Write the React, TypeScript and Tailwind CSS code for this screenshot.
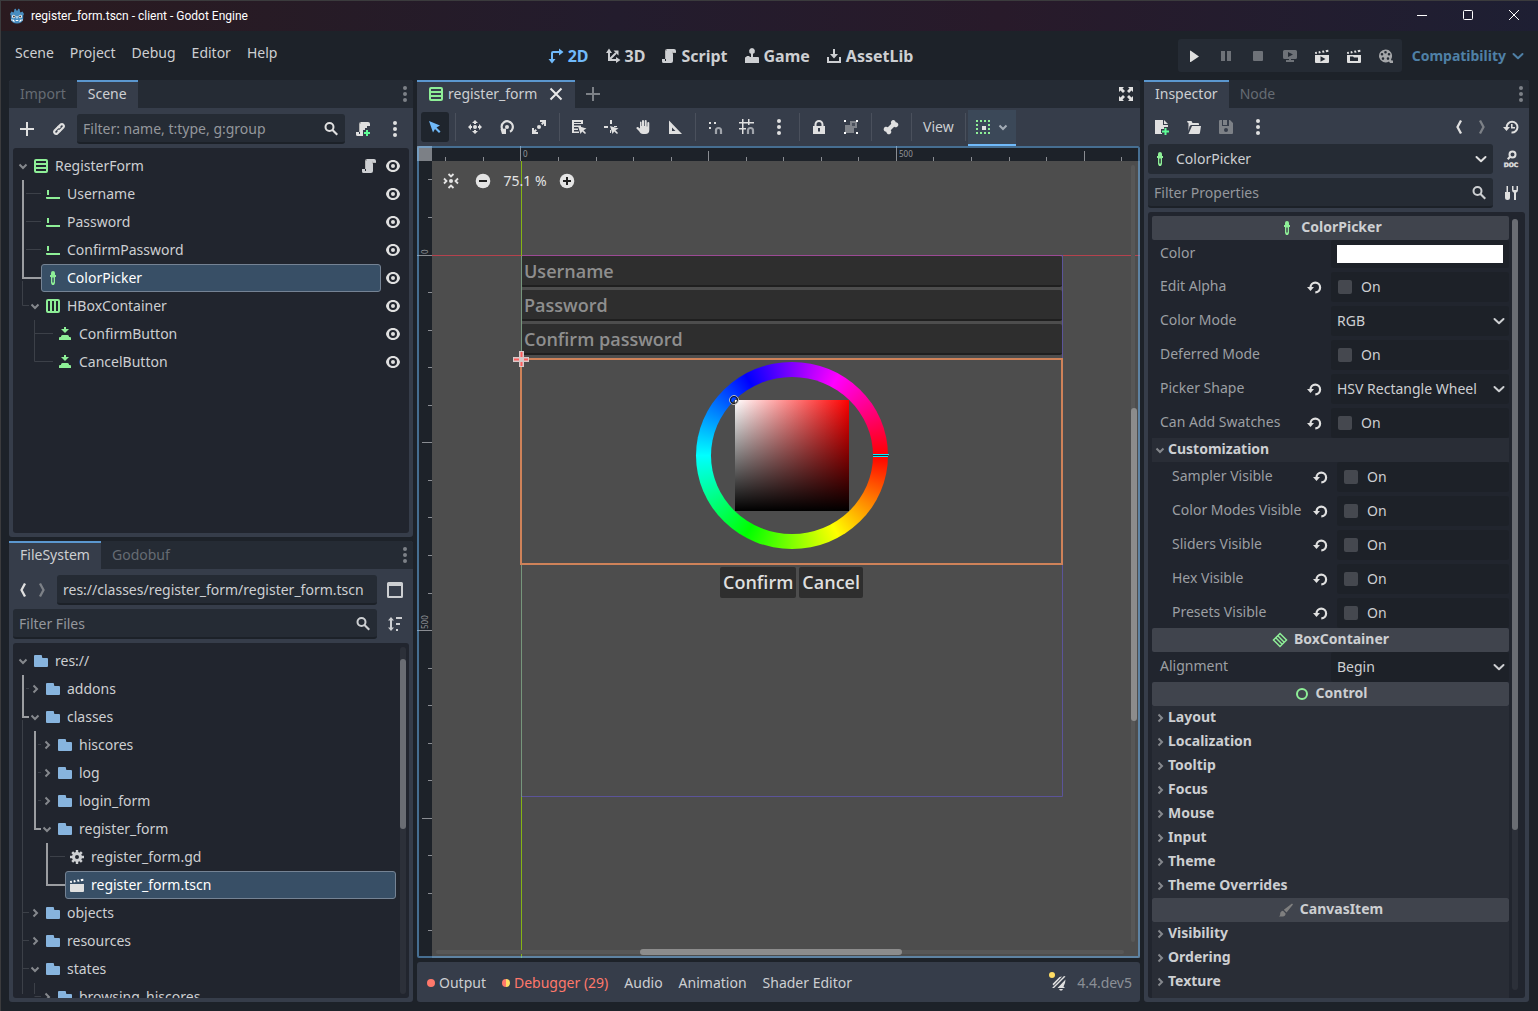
import type { ReactNode } from "react";

type IconProps = { className?: string };

function Svg({ className = "", children }: { className?: string; children: ReactNode }) {
  return (
    <svg viewBox="0 0 16 16" fill="currentColor" aria-hidden="true" className={`size-4 shrink-0 ${className}`}>
      {children}
    </svg>
  );
}

/* ---------- icons ---------- */

const PlusIcon = ({ className }: IconProps) => (
  <Svg className={className}><path d="M7 1h2v6h6v2H9v6H7V9H1V7h6z" /></Svg>
);
const LinkIcon = () => (
  <Svg>
    <g fill="none" stroke="currentColor" strokeWidth="2.200">
      <path d="M6.800 6.400 9.700 3.500a2 2 0 0 1 2.800 2.800L9.600 9.200a2 2 0 0 1-2.800 0" />
      <path d="M9.200 9.600 6.300 12.500A2 2 0 0 1 3.500 9.700L6.400 6.800a2 2 0 0 1 2.800 0" />
    </g>
  </Svg>
);
const SearchIcon = () => (
  <Svg>
    <circle cx="6.500" cy="6" r="4" fill="none" stroke="currentColor" strokeWidth="2" />
    <path d="m8.500 9.500 1.500-1.500 5 5-1.500 1.500z" />
  </Svg>
);
const DotsIcon = ({ className }: IconProps) => (
  <Svg className={className}>
    <circle cx="8" cy="2" r="2" /><circle cx="8" cy="8" r="2" /><circle cx="8" cy="14" r="2" />
  </Svg>
);
const ScriptIcon = () => (
  <Svg>
    <path d="M6 1v1a1 1 0 0 0-1 1v10H4v-2H1v2.500A1.500 1.500 0 0 0 2.500 15H10a2 2 0 0 0 2-2V5h3V3a2 2 0 0 0-2-2z" />
    <path d="M6 1a2 2 0 0 0-2 2v8h1V3a1 1 0 0 1 1-1zM11 3v3h1V5h3V4h-3z" fill="#b4b4b4" />
  </Svg>
);
const ScriptAddIcon = () => (
  <Svg>
    <path d="M6 1v1a1 1 0 0 0-1 1v10H4v-2H1v2.500A1.500 1.500 0 0 0 2.500 15H8v-2h0V9h2V7h2V5h3V3a2 2 0 0 0-2-2z" />
    <path d="M6 1a2 2 0 0 0-2 2v8h1V3a1 1 0 0 1 1-1z" fill="#b4b4b4" />
    <path d="M11 9h2v2h2v2h-2v2h-2v-2H9v-2h2z" fill="#5fff97" />
  </Svg>
);
const VBoxIcon = () => (
  <Svg className="text-[#8eef97]">
    <path fillRule="evenodd" d="M3 1a2 2 0 0 0-2 2v10a2 2 0 0 0 2 2h10a2 2 0 0 0 2-2V3a2 2 0 0 0-2-2zm0 2h10v2H3zm0 4h10v2H3zm0 4h10v2H3z" />
  </Svg>
);
const HBoxIcon = () => (
  <Svg className="text-[#8eef97]">
    <path fillRule="evenodd" d="M3 1a2 2 0 0 0-2 2v10a2 2 0 0 0 2 2h10a2 2 0 0 0 2-2V3a2 2 0 0 0-2-2zm0 2h2v10H3zm4 0h2v10H7zm4 0h2v10h-2z" />
  </Svg>
);
const LineEditIcon = () => (
  <Svg className="text-[#8eef97]"><path d="M2 4h2v5H2zM1 11h14v2H2a1 1 0 0 1-1-1z" /></Svg>
);
const PickerIcon = () => (
  <Svg className="text-[#8eef97]">
    <path fillRule="evenodd" d="M8 1a2 2 0 0 0-2 2v2H5v2h1v6l1 2h2l1-2V7h1V5h-1V3a2 2 0 0 0-2-2zM7.300 7.500h1.400v5H7.300z" />
  </Svg>
);
const ButtonIcon = () => (
  <Svg className="text-[#8eef97]">
    <path d="M7 1h2v2h3L8 7 4 3h3zM5.500 9h5A1.500 1.500 0 0 1 12 10.500V11h1a1 1 0 0 1 1 1v2H2v-2a1 1 0 0 1 1-1h1v-.5A1.500 1.500 0 0 1 5.500 9z" />
  </Svg>
);
const EyeIcon = () => (
  <Svg>
    <path fillRule="evenodd" d="M8 2C4.200 2 1.500 4.700 1 8c.5 3.300 3.200 6 7 6s6.500-2.700 7-6c-.5-3.300-3.200-6-7-6zm0 2a4 4 0 1 1 0 8 4 4 0 0 1 0-8zm0 2a2 2 0 1 0 0 4 2 2 0 0 0 0-4z" />
  </Svg>
);
const FolderIcon = () => (
  <Svg className="text-[#87b4de]">
    <path d="M2 2a1 1 0 0 0-1 1v10a1 1 0 0 0 1 1h12a1 1 0 0 0 1-1V6a1 1 0 0 0-1-1h-4a1 1 0 0 1-1-1V3a1 1 0 0 0-1-1z" />
  </Svg>
);
const GearIcon = () => (
  <Svg>
    <circle cx="8" cy="8" r="3.500" fill="none" stroke="currentColor" strokeWidth="3" />
    <path d="M6.800 1h2.400v3H6.800zM6.800 12h2.400v3H6.800zM1 6.800h3v2.400H1zM12 6.800h3v2.400h-3z" />
    <path d="m2.300 4.100 1.800-1.800 2 2-1.800 1.800zM9.900 11.700l1.800-1.800 2 2-1.800 1.800zM11.900 2.300l1.800 1.800-2 2-1.800-1.800zM4.300 9.900l1.800 1.800-2 2-1.800-1.800z" />
  </Svg>
);
const clapSlats = "m1 4 .3 2 1.800-.3L2.700 3.700zM4.500 3.400l.3 2 2-.3-.8-2zM8 2.800l.6 2 2-.3-.8-2zM11.500 2.200l.7 2 2.300-.4-.3-2z";
const SceneFileIcon = () => (
  <Svg><path d={clapSlats} /><path d="M1 7h14v7a1 1 0 0 1-1 1H2a1 1 0 0 1-1-1z" fill="#e0e0e0" /></Svg>
);
const PlaySceneIcon = () => (
  <Svg><path d={clapSlats} /><path fillRule="evenodd" d="M1 7h14v7a1 1 0 0 1-1 1H2a1 1 0 0 1-1-1zm5.500 1.200v5.600L11.500 11z" /></Svg>
);
const PlayCustomIcon = () => (
  <Svg><path d={clapSlats} /><path fillRule="evenodd" d="M1 7h14v7a1 1 0 0 1-1 1H2a1 1 0 0 1-1-1zm3 1.500V13h8V9.500H8l-1-1z" /></Svg>
);
const ChevronDown = ({ className = "" }: IconProps) => (
  <svg viewBox="0 0 12 12" aria-hidden="true" className={`size-3 shrink-0 ${className}`}>
    <path d="m2.500 4.500 3.500 3.500 3.500-3.500" fill="none" stroke="currentColor" strokeWidth="2" />
  </svg>
);
const ChevronRight = ({ className = "" }: IconProps) => (
  <svg viewBox="0 0 12 12" aria-hidden="true" className={`size-3 shrink-0 ${className}`}>
    <path d="m4.500 2.500 3.500 3.500-3.500 3.500" fill="none" stroke="currentColor" strokeWidth="2" />
  </svg>
);
const DropIcon = ({ className }: IconProps) => (
  <Svg className={className}><path d="M3.500 6 8 10.200 12.500 6" fill="none" stroke="currentColor" strokeWidth="2" strokeLinecap="round" strokeLinejoin="round" /></Svg>
);
const BackIcon = () => (
  <Svg className="text-[#e0e0e0]"><path d="M10 1.500 6.500 8l3.500 6.500" fill="none" stroke="currentColor" strokeWidth="2.300" /></Svg>
);
const ForwardIcon = () => (
  <Svg><path d="M5 1.500 8.500 8 5 14.500" fill="none" stroke="currentColor" strokeWidth="2.300" /></Svg>
);
const SplitIcon = () => (
  <Svg><path fillRule="evenodd" d="M1.500 0A1.500 1.500 0 0 0 0 1.500v13A1.500 1.500 0 0 0 1.500 16h13a1.500 1.500 0 0 0 1.500-1.500v-13A1.500 1.500 0 0 0 14.500 0zM2 4h12v10H2z" /></Svg>
);
const SortIcon = () => (
  <Svg>
    <path d="M4 1 7 4.500H5v7h2L4 15l-3-3.500h2v-7H1zM9 1h6v2H9zM9 7h4v2H9zM9 13h2v2H9z" />
  </Svg>
);
const CloseIcon = () => (
  <Svg><path d="m2.500 2.500 11 11m0-11-11 11" fill="none" stroke="currentColor" strokeWidth="2" /></Svg>
);
const ExpandIcon = () => (
  <Svg>
    <path d="M1 1h5L4.500 2.500 7 5 5 7 2.500 4.500 1 6zM15 1v5l-1.500-1.500L11 7 9 5l2.500-2.500L10 1zM1 15v-5l1.500 1.500L5 9l2 2-2.500 2.500L6 15zM15 15h-5l1.500-1.500L9 11l2-2 2.500 2.500L15 10z" />
  </Svg>
);
const SelectIcon = () => (
  <Svg className="text-[#70bafa]"><path d="m2 2 4 11.500 2-3.500 4 4 1.500-1.500-4-4 3.500-2z" /></Svg>
);
const MoveIcon = () => (
  <Svg>
    <circle cx="8" cy="8" r="2" />
    <path d="m8 1 3 3H9v1H7V4H5zM8 15l-3-3h2v-1h2v1h2zM1 8l3-3v2h1v2H4v2zM15 8l-3 3V9h-1V7h1V5z" />
  </Svg>
);
const RotateIcon = () => (
  <Svg>
    <path d="M4 11.500A5.600 5.600 0 1 1 11 12.700" fill="none" stroke="currentColor" strokeWidth="2.200" />
    <circle cx="8" cy="8" r="2" />
    <path d="M1.500 10 7 9.500V15h-4z" />
  </Svg>
);
const ScaleIcon = () => (
  <Svg>
    <circle cx="8" cy="8" r="2" />
    <path d="M9 1h6v6h-2V4.500L11.500 6 10 4.500 11.500 3H9zM1 9h2v2.500L4.500 10 6 11.500 4.500 13H7v2H1z" />
  </Svg>
);
const ListSelectIcon = () => (
  <Svg>
    <path fillRule="evenodd" d="M1 1h11v4H3v1.500h7V8H3v1.500h4V11H3v1.500h5V14H1zM3 3v1h7V3z" />
    <path d="m7 7 2.500 8 1.700-2.500L14 15l1-1-2.500-2.800L15.500 9.500z" />
  </Svg>
);
const PivotIcon = () => (
  <Svg>
    <path d="M7 1h2v4H7zM1 7h4v2H1zM7 11h1v3H7zM11 7h3v1h-3z" />
    <path d="m7 7 2.500 8 1.700-2.500L14 15l1-1-2.500-2.800L15.500 9.500z" />
  </Svg>
);
const PanIcon = () => (
  <Svg>
    <path d="M7 2a1 1 0 0 1 2 0v5h.7V2a1 1 0 0 1 2 0v5.500h.6V4A1 1 0 0 1 14.300 4v7a4 4 0 0 1-4 4H8c-2 0-3-1-4-3L1.500 9.500c-.5-1 .8-2 1.800-1.200L5 9.500V3a.8.8 0 0 1 1.500 0v4H7z" />
  </Svg>
);
const RulerIcon = () => (
  <Svg><path fillRule="evenodd" d="M2 1.500V15h13zM5 8.500l3.500 3.500H5z" /></Svg>
);
const Magnet = () => <path d="M9 15v-3.500a2.500 2.500 0 0 1 5 0V15" fill="none" stroke="#a0a4ab" strokeWidth="2.200" />;
const SmartSnapIcon = () => (
  <Svg><path d="M2 3h2v2H2zM7 3h2v2H7zM2 8h2v2H2z" /><Magnet /></Svg>
);
const GridSnapIcon = () => (
  <Svg>
    <path d="M3 0h1.500v3H9V0h1.500v3H15v1.500h-4.500V6H9V4.500H4.500V9H7v1.500H4.500V15H3v-4.500H0V9h3V4.500H0V3h3z" /><Magnet />
  </Svg>
);
const LockIcon = () => (
  <Svg><path fillRule="evenodd" d="M8 1a4.500 4.500 0 0 0-4.500 4.500V7H2v8h12V7h-1.500V5.500A4.500 4.500 0 0 0 8 1zm0 2a2.500 2.500 0 0 1 2.500 2.500V7h-5V5.500A2.500 2.500 0 0 1 8 3zM7 9h2v3.500H7z" /></Svg>
);
const GroupIcon = () => (
  <Svg>
    <path d="M7 2h7v7h-3v5H2V6h5z" fill="#7f838a" />
    <path d="M9 4h3v3H9z" fill="#4b515d" />
    <path d="M1 1h2v2H1zM13 1h2v2h-2zM1 13h2v2H1zM13 13h2v2h-2z" fill="#ffffff" />
  </Svg>
);
const BoneIcon = () => (
  <Svg>
    <path d="M10.500 1A2.500 2.500 0 0 0 8.300 4.800L4.800 8.300A2.500 2.500 0 1 0 3.300 12.700 2.500 2.500 0 1 0 7.700 11.200L11.200 7.700A2.500 2.500 0 1 0 12.700 3.300 2.500 2.500 0 0 0 10.500 1z" />
  </Svg>
);
const AnchorIcon = () => (
  <Svg>
    <path d="M1 2H15M1 14H15M2 1V15M14 1V15" fill="none" stroke="#8eef97" strokeWidth="2" strokeDasharray="2 2" />
    <path d="M7 7h4v4H7z" fill="#e0e0e0" />
  </Svg>
);
const CenterIcon = () => (
  <Svg className="text-[#e4e4e4]">
    <circle cx="8" cy="8" r="2" />
    <path d="M5.500 1 8 3.500 10.500 1M5.500 15 8 12.500l2.500 2.500M1 5.500 3.500 8 1 10.500M15 5.500 12.500 8l2.500 2.500" fill="none" stroke="currentColor" strokeWidth="1.800" />
  </Svg>
);
const ZoomOutIcon = () => (
  <Svg><circle cx="8" cy="8" r="7.300" fill="#e4e4e4" /><path d="M4 7h8v2H4z" fill="#222" /></Svg>
);
const ZoomInIcon = () => (
  <Svg><circle cx="8" cy="8" r="7.300" fill="#e4e4e4" /><path d="M4 7h3V4h2v3h3v2H9v3H7V9H4z" fill="#222" /></Svg>
);
const TwoDIcon = () => (
  <Svg><path d="M3 11V5a2 2 0 0 1 2-2h6V0.500L15.500 4 11 7.500V5H5v6h2.500L4 15.500.5 11z" /></Svg>
);
const ThreeDIcon = () => (
  <Svg>
    <path d="M4 11V5M5 12h7M5 11l6-6" fill="none" stroke="currentColor" strokeWidth="2" />
    <path d="M4 0.500 7 5H1zM15.500 12 11 15V9zM13.500 2.500v5L8.500 2.500zM3 10h2v3H3z" />
  </Svg>
);
const GameIcon = () => (
  <Svg><path d="M8 0a3 3 0 0 0-1 5.800V9H5.500V8h-3v1H2a1 1 0 0 0-1 1v5h14v-5a1 1 0 0 0-1-1H9V5.800A3 3 0 0 0 8 0z" /></Svg>
);
const AssetIcon = () => (
  <Svg><path d="M7 1h2v5h3l-4 4.500L4 6h3zM1 9h2v4h10V9h2v6H1z" /></Svg>
);
const PlayIcon = () => <Svg><path d="M4 3v10.500a.5.500 0 0 0 .8.400L13 8.500 4.800 2.700A.5.500 0 0 0 4 3z" /></Svg>;
const PauseIcon = () => <Svg><path d="M3 3h4v10H3zM9 3h4v10H9z" /></Svg>;
const StopIcon = () => <Svg><rect x="3" y="3" width="10" height="10" rx="1" /></Svg>;
const RemoteIcon = () => (
  <Svg><path fillRule="evenodd" d="M2.500 2A1.500 1.500 0 0 0 1 3.500v6A1.500 1.500 0 0 0 2.500 11H7v1H4v2h8v-2H9v-1h4.500A1.500 1.500 0 0 0 15 9.500v-6A1.500 1.500 0 0 0 13.500 2zM6 4l5 2.500L6 9z" /></Svg>
);
const MovieIcon = () => (
  <Svg>
    <path fillRule="evenodd" d="M7.500 1.500a6.500 6.500 0 1 0 3.500 12l1 1.500h3v-2.500h-1.500L13 11.500A6.500 6.500 0 0 0 7.500 1.500zM7.500 3a1.300 1.300 0 1 1 0 2.600 1.300 1.300 0 0 1 0-2.600zM4 5a1.300 1.300 0 1 1 0 2.600A1.300 1.300 0 0 1 4 5zm7 0a1.300 1.300 0 1 1 0 2.600A1.300 1.300 0 0 1 11 5zM5 9.300a1.300 1.300 0 1 1 0 2.600 1.300 1.300 0 0 1 0-2.600zm5 0a1.300 1.300 0 1 1 0 2.600 1.300 1.300 0 0 1 0-2.600z" />
  </Svg>
);
const NewFileIcon = () => (
  <Svg className="text-[#e0e0e0]">
    <path d="M1 1h8v5h5v2h-4v2H7v4h1v1H1zM10 1l4 4h-4z" />
    <path d="M10.500 9h2v2.500H15v2h-2.500V16h-2v-2.500H8v-2h2.500z" fill="#5fff97" />
  </Svg>
);
const OpenIcon = () => (
  <Svg><path d="M1 3a1 1 0 0 1 1-1h3.500l1 2H12a1 1 0 0 1 1 1v1H5.500a2 2 0 0 0-2 1.500L2.500 12V4zM6 7h9l-1 6.500a1.500 1.500 0 0 1-1.500 1.500H2.500z" /></Svg>
);
const SaveIcon = () => (
  <Svg><path fillRule="evenodd" d="M2 1a1 1 0 0 0-1 1v12a1 1 0 0 0 1 1h12a1 1 0 0 0 1-1V4l-3-3zm2 0h1v5h4V1h2v6H4zM8 9a2 2 0 1 1 0 4 2 2 0 0 1 0-4z" /></Svg>
);
const HistoryIcon = () => (
  <Svg>
    <path d="M3.700 8.500A5.400 5.400 0 1 1 8.500 13.500" fill="none" stroke="currentColor" strokeWidth="2" />
    <path d="M0 8h7l-3.500 4zM8 5h1.600v3H12v1.600H8z" />
  </Svg>
);
const DocIcon = () => (
  <Svg className="overflow-visible text-[#e0e0e0]">
    <circle cx="9.500" cy="3.500" r="3" fill="none" stroke="currentColor" strokeWidth="2" />
    <path d="m6.500 4.800 1.500 1.500L5.500 9 4 7.500z" />
    <text x="8" y="15.500" textAnchor="middle" fontSize="6" fontWeight="700" fontFamily="DejaVu Sans, sans-serif" stroke="currentColor" strokeWidth="0.400">DOC</text>
  </Svg>
);
const ToolsIcon = () => (
  <Svg>
    <path d="M3.500 1h1.500v6H7v5.500a2.500 2.500 0 0 1-5 0V7h1.500zM9 1v4a3 3 0 0 0 2 2.800V15h2V7.800A3 3 0 0 0 15 5V1h-1.500v4h-3V1z" />
  </Svg>
);
const RevertIcon = () => (
  <Svg className="text-[#e0e0e0]">
    <path d="M4.500 8.500A4.800 4.800 0 1 1 9.300 13.300" fill="none" stroke="currentColor" strokeWidth="2.200" />
    <path d="M1 8h7l-3.500 4z" />
  </Svg>
);
const BoxContainerIcon = () => (
  <Svg className="text-[#8eef97]">
    <path d="M8 1.500 14.500 8 8 14.500 1.500 8zM5.800 3.800l6.400 6.400M3.800 5.800l6.400 6.400" fill="none" stroke="currentColor" strokeWidth="1.500" />
  </Svg>
);
const ControlIcon = () => (
  <Svg className="text-[#8eef97]"><circle cx="8" cy="8" r="5" fill="none" stroke="currentColor" strokeWidth="2" /></Svg>
);
const BrushIcon = () => (
  <Svg className="text-[#7f7f7f]"><path d="M14 1.500 15 2.500 8.500 10.500 5.800 7.800zM5 8.800l2.600 2.600c0 2.500-2 3.600-6.600 3.100 1.400-1 1-1.700 1.200-3C2.500 9.800 3.700 8.800 5 8.800z" /></Svg>
);
const BellOffIcon = () => (
  <Svg className="text-[#e0e0e0]">
    <path d="M11 1.500 2.500 10.500 1.500 9 5 5.500 8.500 2zM14.500 1.500 3 13H1l12-12zM14.500 4.500 14 8l-1.500 3.500L14 13H6.500zM8 14h4l-1 1.500H9z" />
  </Svg>
);
const GodotLogo = () => (
  <Svg>
    <path d="M1 6 2.500 3.500 4.500 4.500 5 3.500 5.500 1 7 .8 7.300 2.500h1.400L9 .8l1.500.2.500 2.500.5 1 2-1L15 6l-.8 1.500V11a6.200 4.500 0 0 1-12.400 0V7.500z" fill="#478cbf" />
    <circle cx="4.700" cy="8.500" r="1.700" fill="#fff" /><circle cx="11.300" cy="8.500" r="1.700" fill="#fff" />
    <circle cx="4.900" cy="8.600" r="1" fill="#414042" /><circle cx="11.100" cy="8.600" r="1" fill="#414042" />
    <path d="M7.500 8h1v2.500h-1zM2 11.500l3 .3v1h2v-.8h2v.8h2v-1l3-.3-.4 1H12v1h-2v-.6H6v.6H4v-1H2.400z" fill="#fff" />
  </Svg>
);

/* ---------- shared pieces ---------- */

function IconButton({ label, children, className = "" }: { label: string; children: ReactNode; className?: string }) {
  return (
    <button type="button" aria-label={label} className={`flex h-[30px] w-7 shrink-0 items-center justify-center rounded-[3px] ${className}`}>
      {children}
    </button>
  );
}

function Tab({ children, active = false }: { children: ReactNode; active?: boolean }) {
  return (
    <button
      type="button"
      role="tab"
      aria-selected={active}
      className={`flex h-7 items-center border-t-2 px-[11px] pb-0.5 ${active ? "border-[#5b97cf] bg-[#363d4a] text-[#cdcfd2]" : "border-transparent text-[#666b73]"}`}
    >
      {children}
    </button>
  );
}

function TabBar({ children }: { children: ReactNode }) {
  return <div role="tablist" className="flex h-7 shrink-0 items-center rounded-t-[3px] bg-[#252b34]">{children}</div>;
}

function DockMenu({ label }: { label: string }) {
  return (
    <button type="button" aria-label={label} className="ml-auto text-[#7d8187]"><DotsIcon /></button>
  );
}

function FilterBox({ label }: { label: string }) {
  return (
    <div className="flex h-[30px] min-w-0 flex-1 items-center rounded-[3px] border-b-2 border-[#1c2128] bg-[#252b34] px-1.5 pt-0.5">
      <input aria-label={label} placeholder={label} className="min-w-0 flex-1 bg-transparent text-[#cdcfd2] outline-none placeholder:text-[#94979c]" />
      <SearchIcon />
    </div>
  );
}

const indent = ["pl-1", "pl-4", "pl-7", "pl-10"];

type Node = { level: number; arrow?: "down" | "right"; icon: ReactNode; name: string; selected?: boolean; extra?: ReactNode; eye?: boolean };

function TreeRow({ level, arrow, icon, name, selected, extra, eye }: Node) {
  return (
    <li className={`flex h-7 shrink-0 items-center ${indent[level]}`}>
      <span className="flex w-3 shrink-0 justify-center text-[#85888d]">
        {arrow === "down" && <ChevronDown />}
        {arrow === "right" && <ChevronRight />}
      </span>
      <div className={`flex h-7 min-w-0 flex-1 items-center gap-1.5 rounded-[3px] border px-[3px] ${selected ? "border-[#758394] bg-[#384f66] text-white" : "border-transparent"}`}>
        {icon}
        <span className="flex-1 truncate">{name}</span>
        {extra}
      </div>
      {eye && <button type="button" aria-label={`Toggle visibility of ${name}`} className="ml-1 text-[#e0e0e0]"><EyeIcon /></button>}
    </li>
  );
}

/* ---------- left docks ---------- */

const sceneNodes: Node[] = [
  { level: 0, arrow: "down", icon: <VBoxIcon />, name: "RegisterForm", extra: <ScriptIcon /> },
  { level: 1, icon: <LineEditIcon />, name: "Username" },
  { level: 1, icon: <LineEditIcon />, name: "Password" },
  { level: 1, icon: <LineEditIcon />, name: "ConfirmPassword" },
  { level: 1, icon: <PickerIcon />, name: "ColorPicker", selected: true },
  { level: 1, arrow: "down", icon: <HBoxIcon />, name: "HBoxContainer" },
  { level: 2, icon: <ButtonIcon />, name: "ConfirmButton" },
  { level: 2, icon: <ButtonIcon />, name: "CancelButton" },
];

const files: Node[] = [
  { level: 0, arrow: "down", icon: <FolderIcon />, name: "res://" },
  { level: 1, arrow: "right", icon: <FolderIcon />, name: "addons" },
  { level: 1, arrow: "down", icon: <FolderIcon />, name: "classes" },
  { level: 2, arrow: "right", icon: <FolderIcon />, name: "hiscores" },
  { level: 2, arrow: "right", icon: <FolderIcon />, name: "log" },
  { level: 2, arrow: "right", icon: <FolderIcon />, name: "login_form" },
  { level: 2, arrow: "down", icon: <FolderIcon />, name: "register_form" },
  { level: 3, icon: <GearIcon />, name: "register_form.gd" },
  { level: 3, icon: <SceneFileIcon />, name: "register_form.tscn", selected: true },
  { level: 1, arrow: "right", icon: <FolderIcon />, name: "objects" },
  { level: 1, arrow: "right", icon: <FolderIcon />, name: "resources" },
  { level: 1, arrow: "down", icon: <FolderIcon />, name: "states" },
  { level: 2, arrow: "right", icon: <FolderIcon />, name: "browsing_hiscores" },
];

function Branches({ bright, dim }: { bright: string; dim: string }) {
  return (
    <svg aria-hidden="true" className="pointer-events-none absolute inset-0 size-full" fill="none">
      <path d={dim} stroke="#3c4048" strokeWidth="1" />
      <path d={bright} stroke="#9b9da1" strokeWidth="2" />
    </svg>
  );
}

function SceneDock() {
  return (
    <section aria-label="Scene" className="flex h-[457px] shrink-0 flex-col rounded-[3px] bg-[#363d4a]">
      <TabBar>
        <Tab>Import</Tab>
        <Tab active>Scene</Tab>
        <DockMenu label="Scene dock options" />
      </TabBar>
      <div className="flex min-h-0 flex-1 flex-col gap-1 px-1 pt-1.5 pb-1">
        <div className="flex gap-1 text-[#e0e0e0]">
          <IconButton label="Add node"><PlusIcon /></IconButton>
          <IconButton label="Instantiate scene"><LinkIcon /></IconButton>
          <FilterBox label="Filter: name, t:type, g:group" />
          <IconButton label="Attach script"><ScriptAddIcon /></IconButton>
          <IconButton label="More options"><DotsIcon /></IconButton>
        </div>
        <div className="relative min-h-0 flex-1 rounded-[3px] bg-[#21252e] py-1 pr-2">
          <Branches
            bright="M10 32V130H28"
            dim="M13 45.500H28M13 73.500H28M13 101.500H28M9.500 133V157.500H16M21.500 172V213.500H40M21.500 185.500H40"
          />
          <ul className="relative">{sceneNodes.map((n) => <TreeRow key={n.name} {...n} eye />)}</ul>
        </div>
      </div>
    </section>
  );
}

function FileDock() {
  return (
    <section aria-label="FileSystem" className="flex min-h-0 flex-1 flex-col rounded-[3px] bg-[#363d4a]">
      <TabBar>
        <Tab active>FileSystem</Tab>
        <Tab>Godobuf</Tab>
        <DockMenu label="File dock options" />
      </TabBar>
      <div className="flex min-h-0 flex-1 flex-col gap-1 px-1 pt-1.5 pb-1">
        <div className="flex items-center">
          <button type="button" aria-label="Back" className="flex w-5 justify-center"><BackIcon /></button>
          <button type="button" aria-label="Forward" className="flex w-5 justify-center text-[#7d8187]"><ForwardIcon /></button>
          <input
            aria-label="Path"
            defaultValue="res://classes/register_form/register_form.tscn"
            className="mr-1 ml-1 h-[30px] min-w-0 flex-1 rounded-[3px] border-b-2 border-[#1c2128] bg-[#252b34] px-1.5 outline-none"
          />
          <IconButton label="Toggle split mode"><SplitIcon /></IconButton>
        </div>
        <div className="flex gap-1">
          <FilterBox label="Filter Files" />
          <IconButton label="Sort files"><SortIcon /></IconButton>
        </div>
        <div className="relative flex min-h-0 flex-1 gap-1 overflow-hidden rounded-[3px] bg-[#21252e] pt-1 pr-[3px]">
          <Branches
            bright="M10 32V74H16M22 88V186H28M34 200V242H52"
            dim="M13 45.500H16M9.500 77V351M25 101.500H28M25 129.500H28M25 157.500H28M37 213.500H52M10 269.500H16M10 297.500H16M10 325.500H16M21.500 340V351M21.500 353.500H28"
          />
          <ul className="relative flex min-w-0 flex-1 flex-col">{files.map((n) => <TreeRow key={n.name} {...n} />)}</ul>
          <div className="mb-1 w-1.5 rounded-full bg-[#2c3039] pt-3">
            <div className="h-[170px] rounded-full bg-[#6a6d73]" />
          </div>
        </div>
      </div>
    </section>
  );
}

/* ---------- centre ---------- */

const Sep = () => <span className="flex w-1 justify-center py-0.5"><span className="w-px bg-[#4a505c]" /></span>;

function CanvasToolbar() {
  return (
    <div className="flex h-[38px] shrink-0 bg-[#363d4a] pl-1 text-[#e0e0e0]">
      <div className="flex items-center gap-1 [&>span]:h-8">
        <IconButton label="Select mode" className="bg-[#1f252d]"><SelectIcon /></IconButton>
        <Sep />
        <IconButton label="Move mode"><MoveIcon /></IconButton>
        <IconButton label="Rotate mode"><RotateIcon /></IconButton>
        <IconButton label="Scale mode"><ScaleIcon /></IconButton>
        <Sep />
        <IconButton label="Selectable nodes"><ListSelectIcon /></IconButton>
        <IconButton label="Change pivot"><PivotIcon /></IconButton>
        <IconButton label="Pan mode"><PanIcon /></IconButton>
        <IconButton label="Ruler mode"><RulerIcon /></IconButton>
        <Sep />
        <IconButton label="Smart snap"><SmartSnapIcon /></IconButton>
        <IconButton label="Grid snap"><GridSnapIcon /></IconButton>
        <IconButton label="Snapping options"><DotsIcon /></IconButton>
        <Sep />
        <IconButton label="Lock"><LockIcon /></IconButton>
        <IconButton label="Group"><GroupIcon /></IconButton>
        <Sep />
        <IconButton label="Skeleton options"><BoneIcon /></IconButton>
        <Sep />
        <button type="button" className="h-[30px] px-1.5 text-[#cdcfd2]">View</button>
        <Sep />
      </div>
      <button type="button" aria-label="Anchor presets" className="mt-0.5 flex w-12 items-center justify-center gap-1.5 border-b-2 border-[#70bafa] bg-[#3b4858]">
        <AnchorIcon />
        <ChevronDown className="text-[#a3acb6]" />
      </button>
    </div>
  );
}

const ticks = Array.from({ length: 60 }, (_, i) => i - 5);

function HRuler() {
  return (
    <svg aria-hidden="true" className="h-[15px] w-full bg-[#1d2229]">
      {ticks.map((k) => {
        const x = Math.round(88.4 + k * 37.55);
        const top = k % 10 === 0 ? 0 : k % 5 === 0 ? 5 : 11;
        return <rect key={k} x={x} y={top} width="1" height={15 - top} fill="#8a8d92" />;
      })}
      <g fill="#94979b" fontSize="8" fontFamily="Noto Sans, sans-serif">
        <text x="91" y="11">0</text>
        <text x="467" y="11">500</text>
      </g>
    </svg>
  );
}

function VRuler() {
  return (
    <svg aria-hidden="true" className="h-full w-[15px] bg-[#1d2229]">
      {ticks.map((k) => {
        const y = Math.round(93.55 + k * 37.55);
        const left = k % 10 === 0 ? 0 : k % 5 === 0 ? 5 : 11;
        return <rect key={k} x={left} y={y} width={15 - left} height="1" fill="#8a8d92" />;
      })}
      <g fill="#94979b" fontSize="8" fontFamily="Noto Sans, sans-serif">
        <text transform="translate(11 93) rotate(-90)">0</text>
        <text transform="translate(11 468) rotate(-90)">500</text>
      </g>
    </svg>
  );
}

function ColorWheel() {
  return (
    <div className="relative flex h-[187px] w-48 items-center justify-center rounded-[50%] bg-[conic-gradient(from_90deg,red,yellow,lime,cyan,blue,magenta,red)]">
      <div className="flex h-[157px] w-[162px] items-center justify-center rounded-[50%] bg-[#4d4d4d]">
        <div className="h-[111px] w-[114px] shrink-0 bg-[linear-gradient(to_top,black,transparent),linear-gradient(to_right,white,red)]" />
      </div>
      <svg aria-hidden="true" className="absolute inset-0 size-full overflow-visible" fill="none">
        <circle cx="38" cy="38" r="4.500" stroke="#c0c0c0" strokeWidth="1" />
        <circle cx="38" cy="38" r="3.500" stroke="#111" strokeWidth="1" />
        <path d="M177 92.500H193M177 94.500H192" stroke="#00f0ff" strokeWidth="1" />
        <path d="M177 93.500H192" stroke="#3a2020" strokeWidth="1" />
      </svg>
    </div>
  );
}

function FormField({ label }: { label: string }) {
  return (
    <input
      aria-label={label}
      placeholder={label}
      className="h-[31px] w-full shrink-0 rounded-[2px] border-b-2 border-[#1f1f1f] bg-[#2e2e2e] px-[3px] outline-none placeholder:text-[#8e8e8e]"
    />
  );
}

function Viewport() {
  return (
    <div className="relative grid min-h-0 flex-1 grid-cols-[15px_minmax(0,1fr)] grid-rows-[15px_minmax(0,1fr)] overflow-hidden">
      <div className="bg-[#7c8086]" />
      <HRuler />
      <VRuler />
      <div className="relative overflow-hidden bg-[#4d4d4d]">
        <div className="absolute top-[95px] left-[89px] flex h-[541px] w-[541px] flex-col gap-[3px] font-['Open_Sans',sans-serif] text-lg leading-6 font-semibold">
          <FormField label="Username" />
          <FormField label="Password" />
          <FormField label="Confirm password" />
          <div className="flex h-[206px] shrink-0 justify-center pt-1"><ColorWheel /></div>
          <div className="flex justify-center gap-[3px] text-[#dedede]">
            <button type="button" className="h-[31px] rounded-[2px] bg-[#2e2e2e] px-[3px] pb-0.5">Confirm</button>
            <button type="button" className="h-[31px] rounded-[2px] bg-[#2e2e2e] px-[3px] pb-0.5">Cancel</button>
          </div>
        </div>
        <svg aria-hidden="true" className="pointer-events-none absolute inset-0 size-full" fill="none">
          <rect x="0" y="94" width="100%" height="1" fill="#b5424e" />
          <rect x="89" y="94" width="542" height="1" fill="#9c4a95" />
          <rect x="89" y="0" width="1" height="100%" fill="#85b414" />
          <rect x="89" y="95" width="1" height="541" fill="#76967c" />
          <path d="M90 635.500H630.500V94" stroke="#5b5499" />
          <rect x="89" y="198" width="541" height="205" stroke="#cf8259" strokeWidth="2" />
          <path d="M89.500 190V206M81 198.500H97" stroke="#d8c8c8" strokeWidth="5" />
          <path d="M89.500 191V205M82 198.500H96" stroke="#ff5c5c" strokeWidth="2" />
          <path d="M87 198.500H92M89.500 196V201" stroke="#d8c8c8" strokeWidth="3" />
          <rect x="699" y="4" width="4" height="777" rx="2" fill="#575757" />
          <rect x="699" y="247" width="6" height="313" rx="3" fill="#8c8c8c" />
          <rect x="4" y="789" width="688" height="4" rx="2" fill="#575757" />
          <rect x="208" y="788" width="262" height="6" rx="3" fill="#8c8c8c" />
        </svg>
        <div className="absolute top-[5px] left-[5px] flex items-center text-[#e4e4e4] [text-shadow:0_0_2px_#000,0_0_2px_#000]">
          <IconButton label="Center view"><CenterIcon /></IconButton>
          <IconButton label="Zoom out" className="ml-1"><ZoomOutIcon /></IconButton>
          <button type="button" className="w-14 text-center">75.1 %</button>
          <IconButton label="Zoom in"><ZoomInIcon /></IconButton>
        </div>
      </div>
      <div className="pointer-events-none absolute inset-0 rounded-[2px] border-2 border-[#70bafa]/50" />
    </div>
  );
}

function BottomBar() {
  return (
    <footer className="mt-1 flex h-10 shrink-0 items-center gap-4 rounded-[3px] bg-[#363d4a] px-2 pt-0.5">
      <button type="button" className="flex items-center gap-1 pl-0.5">
        <span className="size-2 rounded-full bg-[#ff786b]" />Output
      </button>
      <button type="button" className="flex items-center gap-1 text-[#ff786b]">
        <span className="size-2 rounded-full bg-[linear-gradient(to_right,#ff786b_50%,#ffdd65_50%)]" />Debugger (29)
      </button>
      <button type="button">Audio</button>
      <button type="button">Animation</button>
      <button type="button">Shader Editor</button>
      <button type="button" aria-label="Notifications" className="relative ml-auto mr-[-6px]">
        <BellOffIcon />
        <span className="absolute -top-[3px] -left-0.5 size-1.5 rounded-full bg-[#ffdd65]" />
      </button>
      <span className="text-[#8b8f96]">4.4.dev5</span>
    </footer>
  );
}

function Centre() {
  return (
    <main className="flex min-w-0 flex-1 flex-col">
      <TabBar>
        <div className="flex h-7 items-center border-t-2 border-[#5b97cf] bg-[#363d4a] px-[11px] pb-0.5">
          <button type="button" role="tab" aria-selected="true" className="flex items-center gap-1"><VBoxIcon />register_form</button>
          <button type="button" aria-label="Close tab" className="ml-[11px] text-[#e8e8e8]"><CloseIcon /></button>
        </div>
        <button type="button" aria-label="Open scene" className="ml-2.5 text-[#7d8187]"><PlusIcon /></button>
        <button type="button" aria-label="Distraction free mode" className="mr-1.5 ml-auto text-[#e0e0e0]"><ExpandIcon /></button>
      </TabBar>
      <CanvasToolbar />
      <Viewport />
      <BottomBar />
    </main>
  );
}

/* ---------- inspector ---------- */

function Property({ id, name, nested = false, revert = false, children }: { id: string; name: string; nested?: boolean; revert?: boolean; children: ReactNode }) {
  return (
    <div className={`flex h-[30px] shrink-0 ${nested ? "pl-5" : "pl-2"}`}>
      <div className="flex min-w-0 flex-1 items-center justify-between pr-[9px]">
        <label htmlFor={id} className="pb-0.5 whitespace-nowrap text-[#9c9fa3]">{name}</label>
        {revert && <button type="button" aria-label={`Reset ${name}`}><RevertIcon /></button>}
      </div>
      <div className={`flex items-center rounded-[3px] bg-[#1d2128] ${nested ? "w-[172px]" : "w-[178px]"}`}>{children}</div>
    </div>
  );
}

function Check({ id, name, nested, revert }: { id: string; name: string; nested?: boolean; revert?: boolean }) {
  return (
    <Property id={id} name={name} nested={nested} revert={revert}>
      <input id={id} type="checkbox" className="ml-[7px] size-3.5 appearance-none rounded-[2px] bg-[#45484f]" />
      <span className="ml-[9px]">On</span>
    </Property>
  );
}

function Choice({ id, name, value, revert }: { id: string; name: string; value: string; revert?: boolean }) {
  return (
    <Property id={id} name={name} revert={revert}>
      <div className="relative flex flex-1 items-center">
        <select id={id} className="h-[30px] w-full appearance-none bg-transparent px-1.5 outline-none"><option>{value}</option></select>
        <DropIcon className="pointer-events-none absolute right-0.5" />
      </div>
    </Property>
  );
}

function Category({ icon, name }: { icon: ReactNode; name: string }) {
  return (
    <h2 className="flex h-6 shrink-0 items-center justify-center gap-1.5 rounded-[2px] bg-[#40444d] font-bold">{icon}<span className="pb-0.5">{name}</span></h2>
  );
}

function Section({ name, open = false }: { name: string; open?: boolean }) {
  return (
    <button type="button" aria-expanded={open} className="flex h-6 shrink-0 items-center gap-0.5 bg-[#292d36] pl-0.5 text-left font-bold">
      {open ? <ChevronDown className="text-[#85888d]" /> : <ChevronRight className="text-[#85888d]" />}
      <span className="pb-0.5">{name}</span>
    </button>
  );
}

function Inspector() {
  return (
    <section aria-label="Inspector" className="flex w-[385px] shrink-0 flex-col rounded-[3px] bg-[#363d4a]">
      <TabBar>
        <Tab active>Inspector</Tab>
        <Tab>Node</Tab>
        <DockMenu label="Inspector dock options" />
      </TabBar>
      <div className="flex min-h-0 flex-1 flex-col gap-1 p-1">
        <div className="mb-[-2px] flex gap-1 text-[#e0e0e0]">
          <IconButton label="New resource"><NewFileIcon /></IconButton>
          <IconButton label="Load resource"><OpenIcon /></IconButton>
          <IconButton label="Save resource" className="text-[#7d8187]"><SaveIcon /></IconButton>
          <IconButton label="Resource options"><DotsIcon /></IconButton>
          <span className="flex-1" />
          <button type="button" aria-label="Previous object" className="flex w-5 items-center justify-center"><BackIcon /></button>
          <button type="button" aria-label="Next object" className="flex w-5 items-center justify-center text-[#7d8187]"><ForwardIcon /></button>
          <IconButton label="Object history"><HistoryIcon /></IconButton>
        </div>
        <div className="flex gap-1">
          <button type="button" className="flex h-[30px] flex-1 items-center gap-2 rounded-[3px] bg-[#252b34] px-1">
            <PickerIcon />
            <span className="flex-1 text-left">ColorPicker</span>
            <DropIcon className="text-[#e0e0e0]" />
          </button>
          <IconButton label="Open documentation"><DocIcon /></IconButton>
        </div>
        <div className="flex gap-1">
          <FilterBox label="Filter Properties" />
          <IconButton label="Manage properties" className="text-[#e0e0e0]"><ToolsIcon /></IconButton>
        </div>
        <div className="flex min-h-0 flex-1 gap-[3px] overflow-hidden rounded-[3px] bg-[#21252e] pt-1 pr-[7px] pl-1">
          <div className="flex min-w-0 flex-1 flex-col">
            <Category icon={<PickerIcon />} name="ColorPicker" />
            <div className="flex flex-col gap-1">
              <div className="flex h-7 pl-2">
                <label htmlFor="color" className="flex-1 pt-[3px] text-[#9c9fa3]">Color</label>
                <div className="w-[178px] rounded-[3px] bg-[#1d2128] px-1.5 py-[5px]">
                  <button id="color" type="button" aria-label="Color" className="block h-[18px] w-full bg-white" />
                </div>
              </div>
              <Check id="alpha" name="Edit Alpha" revert />
              <Choice id="mode" name="Color Mode" value="RGB" />
              <Check id="deferred" name="Deferred Mode" />
              <Choice id="shape" name="Picker Shape" value="HSV Rectangle Wheel" revert />
              <Check id="swatches" name="Can Add Swatches" revert />
            </div>
            <Section name="Customization" open />
            <div className="flex flex-col gap-1">
              <Check id="sampler" name="Sampler Visible" nested revert />
              <Check id="modes" name="Color Modes Visible" nested revert />
              <Check id="sliders" name="Sliders Visible" nested revert />
              <Check id="hex" name="Hex Visible" nested revert />
              <Check id="presets" name="Presets Visible" nested revert />
            </div>
            <Category icon={<BoxContainerIcon />} name="BoxContainer" />
            <Choice id="alignment" name="Alignment" value="Begin" />
            <Category icon={<ControlIcon />} name="Control" />
            {["Layout", "Localization", "Tooltip", "Focus", "Mouse", "Input", "Theme", "Theme Overrides"].map((s) => <Section key={s} name={s} />)}
            <Category icon={<BrushIcon />} name="CanvasItem" />
            {["Visibility", "Ordering", "Texture"].map((s) => <Section key={s} name={s} />)}
            <div className="flex-1 bg-[#292d36]" />
          </div>
          <div className="mt-[3px] mb-2 w-1.5 rounded-full bg-[#2c3039]">
            <div className="h-[611px] rounded-full bg-[#6a6d73]" />
          </div>
        </div>
      </div>
    </section>
  );
}

/* ---------- window ---------- */

function TitleBar() {
  return (
    <header className="flex h-[30px] shrink-0 items-center bg-[linear-gradient(to_right,#2a1a1f,#231c2d_40%,#281a2a_65%,#1e1f33)] pr-2 pl-2 text-white">
      <GodotLogo />
      <h1 className="ml-1.5 flex-1 font-['Roboto',sans-serif] text-xs">register_form.tscn - client - Godot Engine</h1>
      <div className="flex gap-[14px]">
        <button type="button" aria-label="Minimize" className="flex w-8 justify-center"><Svg><path d="M3 7h10v1H3z" /></Svg></button>
        <button type="button" aria-label="Maximize" className="flex w-8 justify-center"><Svg><rect x="3.500" y="2.500" width="9" height="9" rx="1" fill="none" stroke="currentColor" /></Svg></button>
        <button type="button" aria-label="Close" className="flex w-8 justify-center"><Svg><path d="m3 2 10 10m0-10L3 12" fill="none" stroke="currentColor" /></Svg></button>
      </div>
    </header>
  );
}

function MenuBar() {
  const screens = [
    { name: "2D", icon: <TwoDIcon />, active: true },
    { name: "3D", icon: <ThreeDIcon /> },
    { name: "Script", icon: <ScriptIcon /> },
    { name: "Game", icon: <GameIcon /> },
    { name: "AssetLib", icon: <AssetIcon /> },
  ];
  const run = [
    { name: "Play", icon: <PlayIcon />, tone: "text-[#e0e0e0]" },
    { name: "Pause", icon: <PauseIcon />, tone: "text-[#6e7278]" },
    { name: "Stop", icon: <StopIcon />, tone: "text-[#6e7278]" },
    { name: "Remote debug", icon: <RemoteIcon />, tone: "text-[#6e7278]" },
    { name: "Play scene", icon: <PlaySceneIcon />, tone: "text-[#e0e0e0]" },
    { name: "Play custom scene", icon: <PlayCustomIcon />, tone: "text-[#e0e0e0]" },
    { name: "Movie maker", icon: <MovieIcon />, tone: "text-[#a4a6a9]" },
  ];
  return (
    <div className="flex h-[49px] shrink-0 items-center justify-between pr-3 pl-[14px]">
      <nav className="flex gap-4 pr-1.5 pb-1.5">
        {["Scene", "Project", "Debug", "Editor", "Help"].map((m) => <button key={m} type="button">{m}</button>)}
      </nav>
      <div className="flex gap-4 text-base font-bold">
        {screens.map((s) => (
          <button key={s.name} type="button" className={`flex items-center gap-1 ${s.active ? "text-[#70bafa]" : ""}`}>{s.icon}{s.name}</button>
        ))}
      </div>
      <div className="flex items-center gap-2.5">
        <div className="flex h-[33px] items-center rounded-[3px] bg-[#252b34]">
          {run.map((r) => (
            <button key={r.name} type="button" aria-label={r.name} className={`flex w-8 justify-center ${r.tone}`}>{r.icon}</button>
          ))}
        </div>
        <button type="button" className="flex items-center gap-1 font-bold text-[#4f80a6]">Compatibility<DropIcon /></button>
      </div>
    </div>
  );
}

export default function App() {
  return (
    <div className="flex h-screen flex-col overflow-hidden border-t border-l border-[#3b3b3d] bg-[#1d2229] font-['Noto_Sans',sans-serif] text-sm leading-5 text-[#cdcfd2]">
      <TitleBar />
      <MenuBar />
      <div className="flex min-h-0 flex-1 gap-1 pr-[9px] pb-[9px] pl-2">
        <aside className="flex w-[404px] shrink-0 flex-col gap-1">
          <SceneDock />
          <FileDock />
        </aside>
        <Centre />
        <Inspector />
      </div>
    </div>
  );
}
